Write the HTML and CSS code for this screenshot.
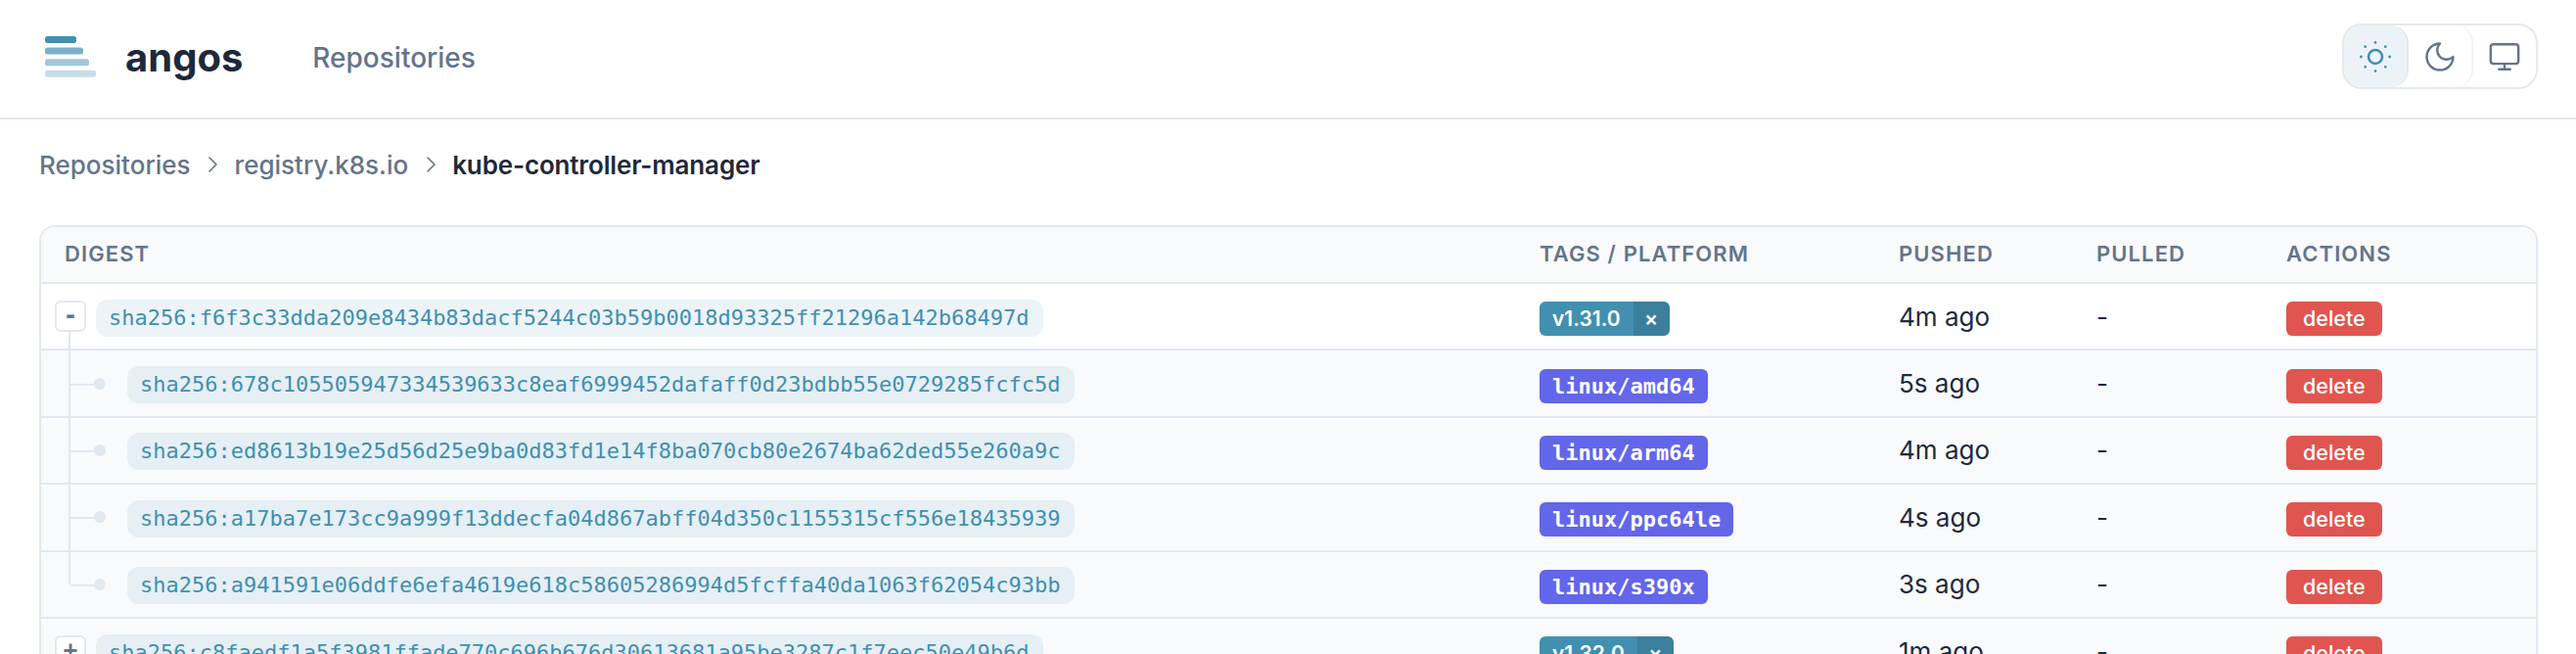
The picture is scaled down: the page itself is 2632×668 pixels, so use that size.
FILE: index.html
```html
<!DOCTYPE html>
<html lang="en">
<head>
<meta charset="utf-8">
<title>angos</title>
<link rel="stylesheet" href="styles.css">
</head>
<body>
<header class="topbar">
  <div class="brand">
    <svg class="logo" width="52" height="42" viewBox="0 0 52 42">
      <rect x="0" y="0" width="32" height="7" rx="2.5" fill="#428fb0"/>
      <rect x="0" y="11.6" width="39" height="7" rx="2.5" fill="#7ab1c9"/>
      <rect x="0" y="23.2" width="45" height="7" rx="2.5" fill="#a1c7da"/>
      <rect x="0" y="34.8" width="52" height="7" rx="2.5" fill="#c6dde8"/>
    </svg>
    <span class="brand-name">angos</span>
    <a class="nav-link">Repositories</a>
  </div>
  <div class="theme">
    <button class="theme-btn active"><svg width="32" height="32" viewBox="0 0 32 32" fill="none" stroke="#428fb0" stroke-linecap="round"><circle cx="16" cy="16" r="7" stroke-width="2.6"/><path stroke-width="2.8" d="M16 1.4h.01M16 30.6h.01M1.4 16h.01M30.6 16h.01M5.7 5.7h.01M26.3 5.7h.01M5.7 26.3h.01M26.3 26.3h.01"/></svg></button>
    <button class="theme-btn"><svg width="36" height="36" viewBox="0 0 24 24" fill="none" stroke="#64748b" stroke-width="1.6" stroke-linecap="round" stroke-linejoin="round"><path d="M12 3a6 6 0 0 0 9 9 9 9 0 1 1-9-9Z"/></svg></button>
    <button class="theme-btn"><svg width="34" height="34" viewBox="0 0 24 24" fill="none" stroke="#64748b" stroke-width="1.7" stroke-linecap="round" stroke-linejoin="round"><rect x="2" y="3" width="20" height="14" rx="2"/><path d="M8 21h8M12 17v4"/></svg></button>
  </div>
</header>
<nav class="crumbs">
  <a>Repositories</a>
  <svg class="sep" width="24" height="24" viewBox="0 0 24 24" fill="none" stroke="#64748b" stroke-width="1.6" stroke-linecap="round" stroke-linejoin="round"><path d="m9 5 7 7-7 7"/></svg>
  <a>registry.k8s.io</a>
  <svg class="sep" width="24" height="24" viewBox="0 0 24 24" fill="none" stroke="#64748b" stroke-width="1.6" stroke-linecap="round" stroke-linejoin="round"><path d="m9 5 7 7-7 7"/></svg>
  <strong>kube-controller-manager</strong>
</nav>
<div class="table-wrap">
  <table>
    <thead>
      <tr><th class="c-digest">Digest</th><th class="c-tags">Tags / Platform</th><th class="c-pushed">Pushed</th><th class="c-pulled">Pulled</th><th>Actions</th></tr>
    </thead>
    <tbody>
      <tr>
        <td><div class="digest"><span class="toggle">-</span><span class="hash">sha256:f6f3c33dda209e8434b83dacf5244c03b59b0018d93325ff21296a142b68497d</span></div></td>
        <td><span class="tag"><span class="tag-name">v1.31.0</span><span class="tag-x">×</span></span></td>
        <td>4m ago</td><td>-</td><td><span class="del">delete</span></td>
      </tr>
      <tr class="tint">
        <td><div class="digest nested"><span class="branch"></span><span class="dot"></span><span class="hash">sha256:678c105505947334539633c8eaf6999452dafaff0d23bdbb55e0729285fcfc5d</span></div></td>
        <td><span class="plat">linux/amd64</span></td>
        <td>5s ago</td><td>-</td><td><span class="del">delete</span></td>
      </tr>
      <tr class="tint">
        <td><div class="digest nested"><span class="branch"></span><span class="dot"></span><span class="hash">sha256:ed8613b19e25d56d25e9ba0d83fd1e14f8ba070cb80e2674ba62ded55e260a9c</span></div></td>
        <td><span class="plat">linux/arm64</span></td>
        <td>4m ago</td><td>-</td><td><span class="del">delete</span></td>
      </tr>
      <tr class="tint">
        <td><div class="digest nested"><span class="branch"></span><span class="dot"></span><span class="hash">sha256:a17ba7e173cc9a999f13ddecfa04d867abff04d350c1155315cf556e18435939</span></div></td>
        <td><span class="plat">linux/ppc64le</span></td>
        <td>4s ago</td><td>-</td><td><span class="del">delete</span></td>
      </tr>
      <tr class="tint">
        <td><div class="digest nested"><span class="branch last"></span><span class="dot"></span><span class="hash">sha256:a941591e06ddfe6efa4619e618c58605286994d5fcffa40da1063f62054c93bb</span></div></td>
        <td><span class="plat">linux/s390x</span></td>
        <td>3s ago</td><td>-</td><td><span class="del">delete</span></td>
      </tr>
      <tr class="tint">
        <td><div class="digest"><span class="toggle">+</span><span class="hash">sha256:c8faedf1a5f3981ffade770c696b676d30613681a95be3287c1f7eec50e49b6d</span></div></td>
        <td><span class="tag"><span class="tag-name">v1.32.0</span><span class="tag-x">×</span></span></td>
        <td>1m ago</td><td>-</td><td><span class="del">delete</span></td>
      </tr>
    </tbody>
  </table>
</div>
</body>
</html>
```
FILE: styles.css
```css
* { box-sizing: border-box; }
html, body { margin: 0; height: 100%; overflow: hidden; background: #fff; }
body { font-family: Inter, "Liberation Sans", sans-serif; color: #1e293b; }

.topbar { height: 122px; border-bottom: 2px solid #e2e8f0; display: flex; align-items: center; justify-content: space-between; padding: 0 39px 5px 46px; }
.brand { display: flex; align-items: center; }
.brand-name { font-size: 40px; font-weight: 700; margin: 3px 0 0 30px; line-height: 44px; }
.nav-link { font-size: 28px; font-weight: 500; color: #64748b; margin: 3px 0 0 71px; }

.theme { display: flex; border: 2px solid #e2e8f0; border-radius: 20px; width: 200px; height: 67px; overflow: hidden; }
.theme-btn { flex: 1; border: 0; background: #fff; padding: 0; display: flex; align-items: center; justify-content: center; border-right: 2px solid #eef2f6; border-radius: 18px; }
.theme-btn:last-child { border-right: 0; }
.theme-btn.active { background: #ecf3f7; border-right-color: #e2e8f0; }

.crumbs { display: flex; align-items: center; padding-left: 40px; height: 92px; font-size: 26px; color: #64748b; font-weight: 500; }
.crumbs strong { color: #1e293b; font-weight: 600; letter-spacing: -0.15px; }
.sep { margin: 0 10.5px; }

.table-wrap { margin: 16px 39px 0 40px; border: 2px solid #e2e8f0; border-radius: 16px; overflow: hidden; }
table { width: 100%; border-collapse: separate; border-spacing: 0; table-layout: fixed; }
th { background: #f8fafc; text-align: left; height: 58px; padding: 0 24px 3px; font-size: 22px; font-weight: 600; color: #64748b; text-transform: uppercase; letter-spacing: 1.1px; border-bottom: 2px solid #e2e8f0; }
.c-digest { width: 1507px; }
.c-tags { width: 367px; }
.c-pushed { width: 202px; }
.c-pulled { width: 194px; }
td { height: 68.4px; padding: 0 24px; font-size: 26px; color: #1e293b; border-bottom: 2px solid #e2e8f0; }
tr.tint td { background: #f8fafc; }

.digest { display: flex; align-items: center; position: relative; }
.toggle { width: 32px; height: 32px; margin: 0 10px 0 -10px; border: 2px solid #e2e8f0; border-radius: 6px; background: #fff; color: #64748b; font: 700 24px/26px "DejaVu Sans Mono", monospace; text-align: center; flex: none; position: relative; z-index: 1; }
.hash { font: 22px/38px "DejaVu Sans Mono", monospace; color: #428fb0; background: rgba(66, 143, 176, 0.1); border-radius: 12px; padding: 0 15px 0 13px; margin-top: 3px; white-space: nowrap; flex: none; }
.nested { padding-left: 64px; height: 44px; }
.branch { position: absolute; left: 4px; top: -34px; bottom: -34px; width: 26px; border-left: 2px solid #e2e8f0; }
.branch::after { content: ""; position: absolute; left: 0; top: 50%; width: 26px; border-top: 2px solid #e2e8f0; }
.branch.last { bottom: 50%; }
.branch.last::after { top: auto; bottom: -2px; }
.dot { position: absolute; left: 30px; top: 50%; width: 12px; height: 12px; margin-top: -6px; border-radius: 50%; background: #e2e8f0; }

.tag { display: inline-flex; height: 35px; margin-top: 5px; border-radius: 6px; overflow: hidden; font-size: 21px; font-weight: 600; color: #fff; line-height: 35px; vertical-align: middle; }
.tag-name { background: #428fb0; padding: 0 13px; }
.tag-x { background: #3a7f9c; width: 37px; text-align: center; }
.plat { display: inline-block; height: 35px; margin-top: 5px; background: #6366e9; color: #fff; border-radius: 6px; padding: 0 13px; font: 700 22px/35px "DejaVu Sans Mono", monospace; vertical-align: middle; }
.del { display: inline-block; height: 35px; margin-top: 5px; line-height: 35px; background: #e05550; color: #fff; border-radius: 6px; padding: 0 17px; font-size: 21.5px; font-weight: 500; vertical-align: middle; }
```
